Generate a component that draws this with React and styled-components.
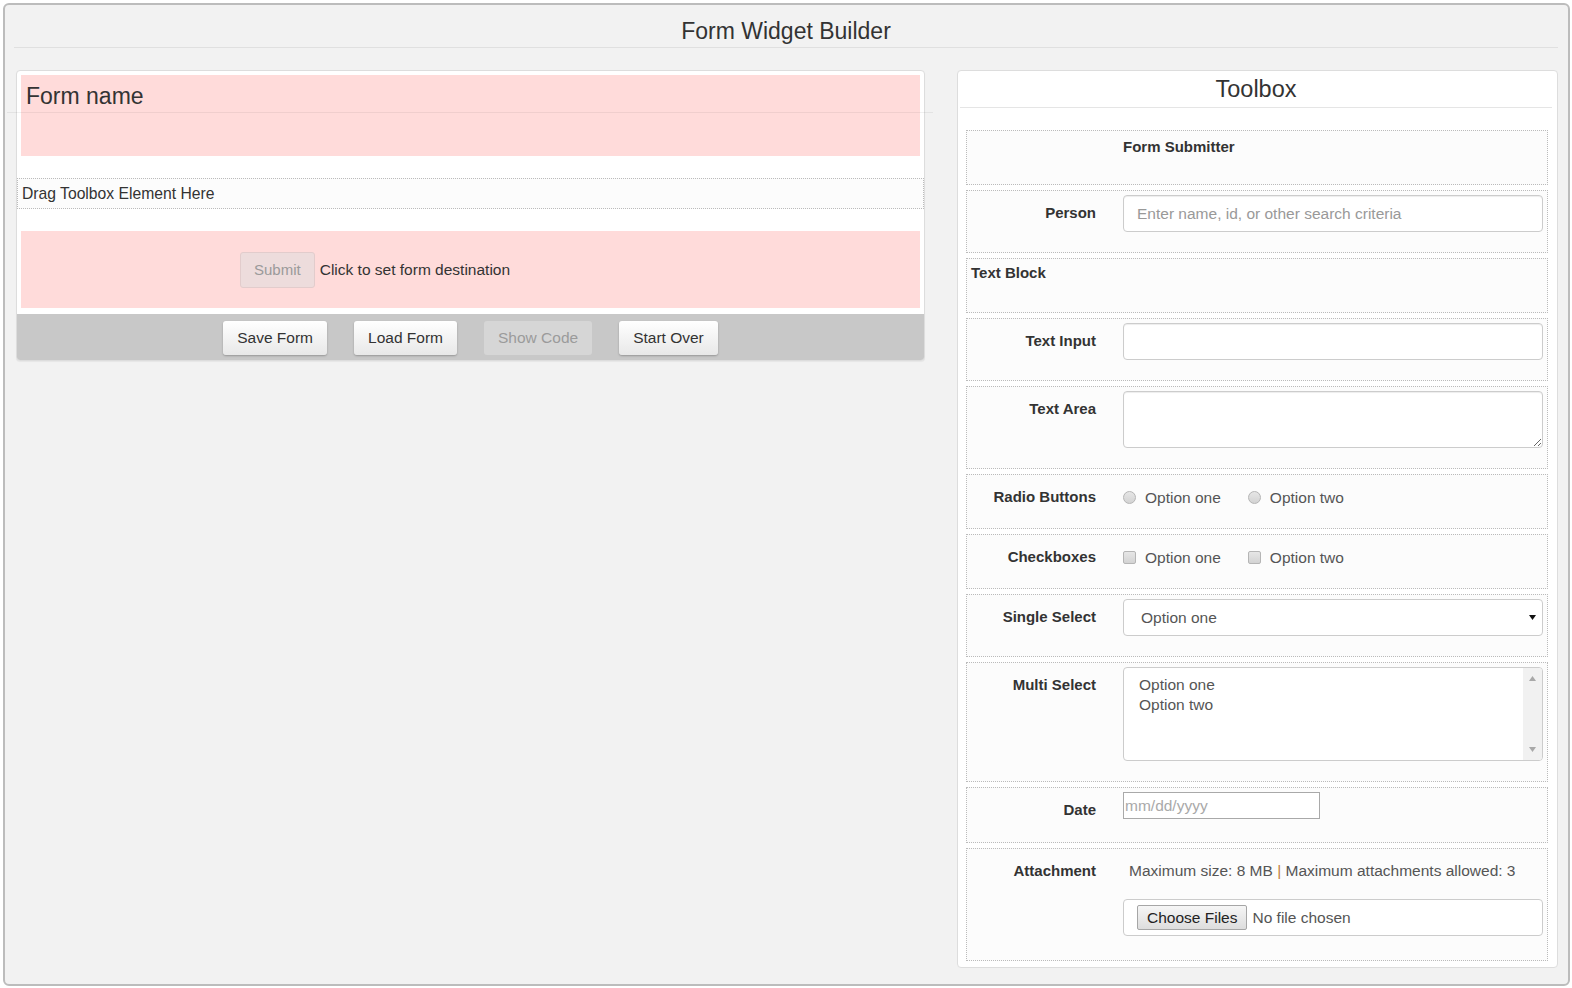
import React from "react";
import styled, { createGlobalStyle } from "styled-components";

const Global = createGlobalStyle`
  html, body { margin: 0; padding: 0; background: #fff; }
  body { font-family: "Liberation Sans", Arial, sans-serif; color: #333; }
  * { box-sizing: border-box; }
`;

const Frame = styled.div`
  width: 1567px;
  height: 983px;
  margin: 3px;
  border: 2px solid #bcbcbc;
  border-radius: 6px;
  background: #f2f2f2;
  padding: 0 10px 0 11px;
`;

const PageTitle = styled.h1`
  margin: 0 0 0 -2px;
  padding-top: 10px;
  font-size: 23px;
  font-weight: normal;
  line-height: 32px;
  text-align: center;
  color: #333;
  border-bottom: 1px solid #e0e0e0;
`;

const Columns = styled.div`
  display: grid;
  grid-template-columns: 909px 601px;
  column-gap: 32px;
  margin-top: 22px;
  align-items: start;
`;

const LeftPanel = styled.div`
  background: #fff;
  border: 1px solid #ddd;
  border-radius: 4px;
  box-shadow: 0 1px 1px rgba(0, 0, 0, 0.05);
`;

const PinkBlock = styled.div`
  position: relative;
  margin: ${(p) => p.$mt}px 4px 0;
  height: ${(p) => p.$h}px;
  background: #ffdbda;
`;

const FormNameBlock = styled(PinkBlock)`
  padding: 8px 5px;
  font-size: 23px;
  line-height: 26px;
  color: #333;
  &::after {
    content: "";
    position: absolute;
    top: 37px;
    left: -14px;
    right: -13px;
    height: 1px;
    background: rgba(0, 0, 0, 0.06);
  }
`;

const SubmitBlock = styled(PinkBlock)`
  display: flex;
  align-items: center;
  gap: 5px;
  padding-left: 219px;
  font-size: 15.5px;
  color: #333;
`;

const DisabledSubmit = styled.span`
  display: inline-flex;
  align-items: center;
  height: 36px;
  padding: 0 13px;
  border: 1px solid #e2cccc;
  border-radius: 3px;
  background: #eddcdc;
  color: #9a9a9a;
  font-size: 15px;
`;

const DropRow = styled.div`
  margin-top: 22px;
  height: 31px;
  border: 1px dotted #bbb;
  background: #fcfcfc;
  padding-left: 4px;
  font-size: 15.7px;
  line-height: 29px;
  color: #333;
`;

const Toolbar = styled.div`
  margin-top: 6px;
  height: 46px;
  background: #c8c8c8;
  border-radius: 0 0 3px 3px;
  display: flex;
  justify-content: center;
  align-items: center;
  gap: 27px;
  padding-top: 1px;
`;

const ToolButton = styled.span`
  display: inline-flex;
  align-items: center;
  height: 34px;
  padding: 0 14px;
  border-radius: 3px;
  font-size: 15.5px;
  color: ${(p) => (p.$disabled ? "#9b9b9b" : "#333")};
  background: ${(p) =>
    p.$disabled ? "#d6d6d6" : "linear-gradient(#ffffff, #e8e8e8)"};
  box-shadow: ${(p) =>
    p.$disabled ? "none" : "0 1px 2px rgba(0,0,0,0.25)"};
`;

const RightPanel = styled.div`
  background: #fff;
  border: 1px solid #ddd;
  border-radius: 4px;
  padding: 0 9px 6px 8px;
`;

const PanelTitle = styled.h2`
  margin: 0 -4px 0 -6px;
  font-size: 23.5px;
  font-weight: normal;
  line-height: 36px;
  text-align: center;
  color: #333;
  border-bottom: 1px solid #e5e5e5;
`;

const RowList = styled.div`
  margin-top: 22px;
  display: flex;
  flex-direction: column;
  gap: 5px;
`;

const Row = styled.div`
  display: grid;
  grid-template-columns: 125px 1fr;
  column-gap: 27px;
  padding: 4px 4px 20px;
  border: 1px dotted #bbb;
  background: #fcfcfc;
  font-size: 15.5px;
  color: #333;
`;

const Label = styled.div`
  text-align: right;
  font-weight: bold;
  font-size: 15px;
  line-height: 20px;
  padding-top: 8px;
  color: #333;
`;

const BoldText = styled.div`
  grid-column: ${(p) => (p.$full ? "1 / -1" : "2")};
  font-weight: bold;
  font-size: 15px;
  line-height: 20px;
  padding-top: ${(p) => p.$pt || 0}px;
  min-height: 29px;
`;

const TextInput = styled.input`
  width: 100%;
  height: 37px;
  border: 1px solid #ccc;
  border-radius: 4px;
  box-shadow: inset 0 1px 1px rgba(0, 0, 0, 0.075);
  padding: 0 13px;
  font-family: "Liberation Sans", Arial, sans-serif;
  font-size: 15.5px;
  color: #555;
  background: #fff;
  &::placeholder { color: #999; }
`;

const TextArea = styled.textarea`
  display: block;
  width: 100%;
  height: 57px;
  border: 1px solid #ccc;
  border-radius: 4px;
  box-shadow: inset 0 1px 1px rgba(0, 0, 0, 0.075);
  background: #fff;
  resize: vertical;
  font-family: "Liberation Sans", Arial, sans-serif;
  font-size: 15px;
`;

const ChoiceGroup = styled.div`
  display: flex;
  align-items: center;
  gap: 27px;
  padding-top: 8px;
  height: 29px;
  line-height: 20px;
`;

const Choice = styled.span`
  display: inline-flex;
  align-items: center;
  gap: 9px;
  color: #555;
`;

const Mark = styled.span`
  display: inline-block;
  width: 13px;
  height: 13px;
  border: 1px solid #b5b5b5;
  border-radius: ${(p) => (p.$round ? "50%" : "2px")};
  background: linear-gradient(#e6e6e6, #d3d3d3);
`;

const SelectBox = styled.div`
  height: 37px;
  border: 1px solid #ccc;
  border-radius: 4px;
  background: #fff;
  display: flex;
  align-items: center;
  justify-content: space-between;
  padding: 0 6px 0 17px;
  color: #555;
`;

const ListBox = styled.div`
  height: 94px;
  border: 1px solid #ccc;
  border-radius: 4px;
  background: #fff;
  display: flex;
  overflow: hidden;
`;

const Options = styled.div`
  flex: 1;
  padding: 7px 15px;
  line-height: 20px;
  color: #555;
`;

const Scrollbar = styled.div`
  width: 19px;
  background: #f1f1f1;
  display: flex;
  flex-direction: column;
  justify-content: space-between;
  align-items: center;
  padding: 8px 0 8px;
`;

const DateWrap = styled.div`
  height: 30px;
`;

const DateInput = styled.input`
  width: 197px;
  height: 27px;
  border: 1px solid #a9a9a9;
  border-radius: 0;
  padding: 0 1px;
  font-family: "Liberation Sans", Arial, sans-serif;
  font-size: 15.5px;
  background: #fff;
  &::placeholder { color: #a9a9a9; }
`;

const AttachInfo = styled.div`
  padding: 8px 0 0 6px;
  line-height: 20px;
  color: #555;
`;

const Sep = styled.span`
  color: #c0803a;
`;

const FileBox = styled.div`
  margin: 18px 0 4px;
  height: 37px;
  border: 1px solid #ccc;
  border-radius: 4px;
  background: #fff;
  display: flex;
  align-items: center;
  gap: 5px;
  padding-left: 13px;
  color: #555;
`;

const FileButton = styled.span`
  display: inline-flex;
  align-items: center;
  height: 25px;
  padding: 0 9px;
  border: 1px solid #a6a6a6;
  border-radius: 2px;
  background: linear-gradient(#f6f6f6, #dddddd);
  color: #222;
`;

const Arrow = ({ up, color = "#111", w = 7, h = 5 }) => (
  <svg width={w} height={h} viewBox="0 0 7 5">
    <path d={up ? "M0 5 L3.5 0 L7 5 Z" : "M0 0 L7 0 L3.5 5 Z"} fill={color} />
  </svg>
);

export default function App() {
  return (
    <>
      <Global />
      <Frame>
        <PageTitle>Form Widget Builder</PageTitle>
        <Columns>
          <LeftPanel>
            <FormNameBlock $mt={4} $h={81}>Form name</FormNameBlock>
            <DropRow>Drag Toolbox Element Here</DropRow>
            <SubmitBlock $mt={22} $h={77}>
              <DisabledSubmit>Submit</DisabledSubmit>
              <span>Click to set form destination</span>
            </SubmitBlock>
            <Toolbar>
              <ToolButton>Save Form</ToolButton>
              <ToolButton>Load Form</ToolButton>
              <ToolButton $disabled>Show Code</ToolButton>
              <ToolButton>Start Over</ToolButton>
            </Toolbar>
          </LeftPanel>

          <RightPanel>
            <PanelTitle>Toolbox</PanelTitle>
            <RowList>
              <Row>
                <BoldText $pt={2}>Form Submitter</BoldText>
              </Row>
              <Row>
                <Label>Person</Label>
                <TextInput placeholder="Enter name, id, or other search criteria" />
              </Row>
              <Row>
                <BoldText $full>Text Block</BoldText>
              </Row>
              <Row>
                <Label>Text Input</Label>
                <TextInput />
              </Row>
              <Row>
                <Label>Text Area</Label>
                <TextArea />
              </Row>
              <Row>
                <Label>Radio Buttons</Label>
                <ChoiceGroup>
                  <Choice><Mark $round />Option one</Choice>
                  <Choice><Mark $round />Option two</Choice>
                </ChoiceGroup>
              </Row>
              <Row>
                <Label>Checkboxes</Label>
                <ChoiceGroup>
                  <Choice><Mark />Option one</Choice>
                  <Choice><Mark />Option two</Choice>
                </ChoiceGroup>
              </Row>
              <Row>
                <Label>Single Select</Label>
                <SelectBox>
                  <span>Option one</span>
                  <Arrow />
                </SelectBox>
              </Row>
              <Row>
                <Label>Multi Select</Label>
                <ListBox>
                  <Options>
                    <div>Option one</div>
                    <div>Option two</div>
                  </Options>
                  <Scrollbar>
                    <Arrow up color="#a8a8a8" />
                    <Arrow color="#a8a8a8" />
                  </Scrollbar>
                </ListBox>
              </Row>
              <Row>
                <Label>Date</Label>
                <DateWrap>
                  <DateInput placeholder="mm/dd/yyyy" />
                </DateWrap>
              </Row>
              <Row>
                <Label>Attachment</Label>
                <div>
                  <AttachInfo>
                    Maximum size: 8 MB <Sep>|</Sep> Maximum attachments allowed: 3
                  </AttachInfo>
                  <FileBox>
                    <FileButton>Choose Files</FileButton>
                    <span>No file chosen</span>
                  </FileBox>
                </div>
              </Row>
            </RowList>
          </RightPanel>
        </Columns>
      </Frame>
    </>
  );
}
